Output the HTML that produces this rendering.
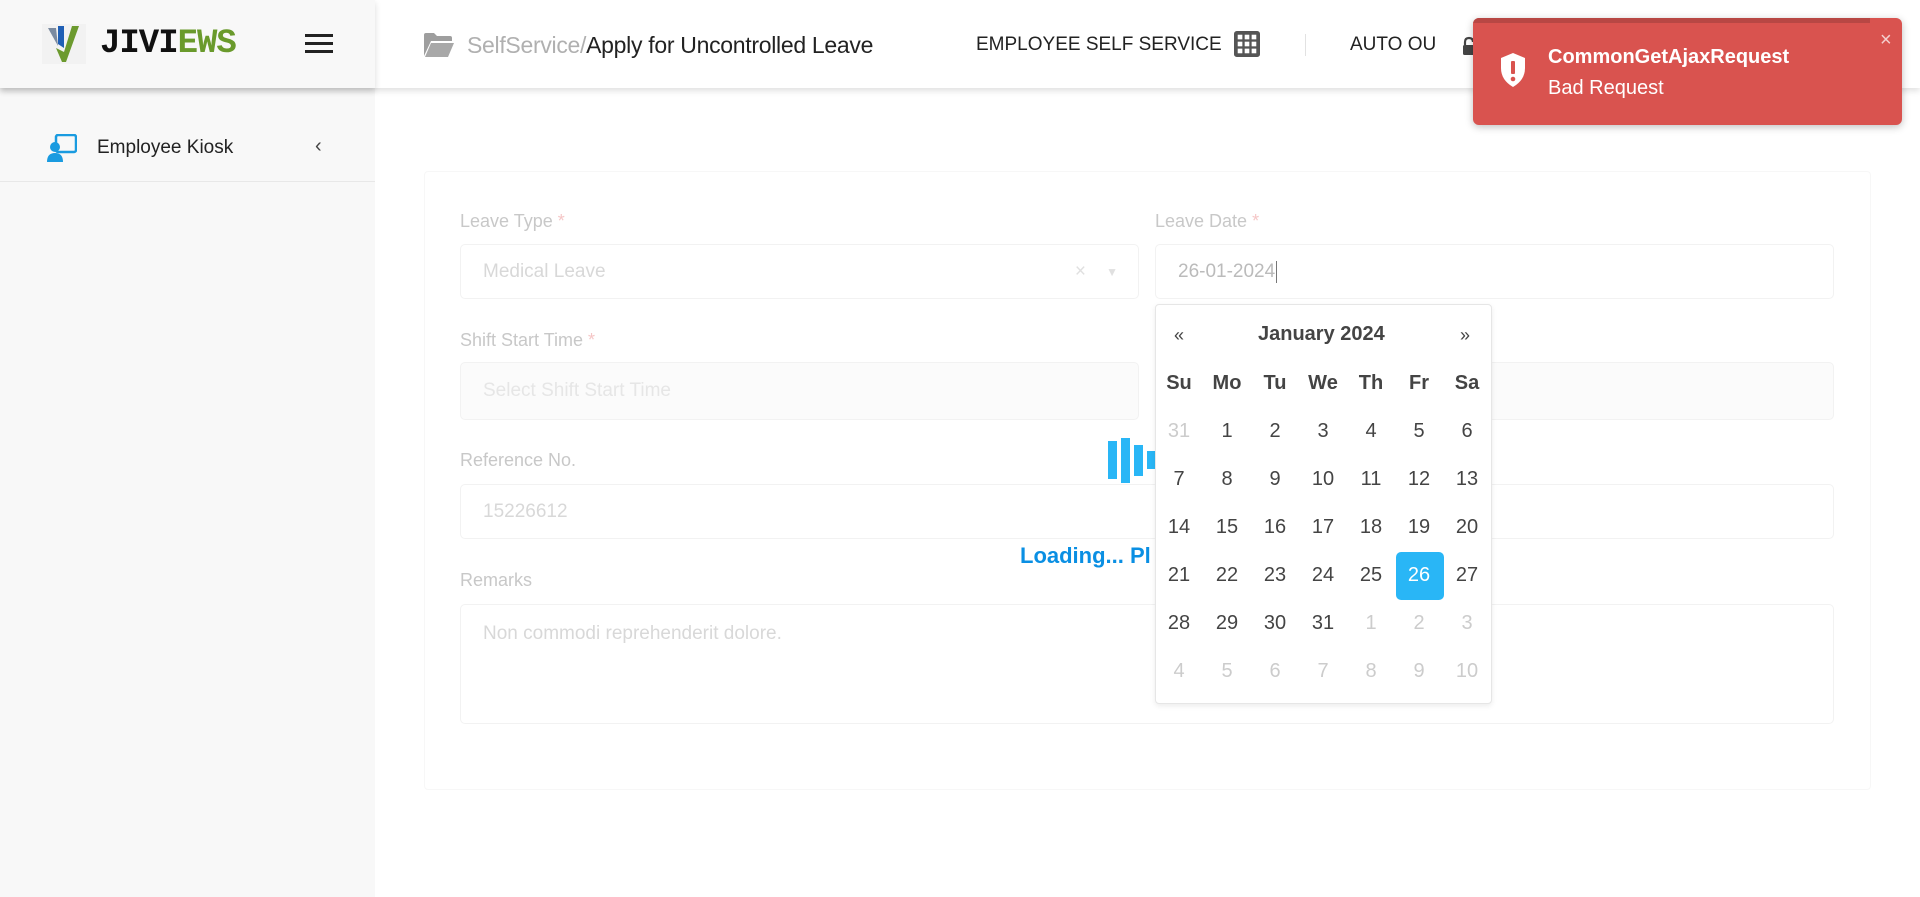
<!DOCTYPE html>
<html><head><meta charset="utf-8"><style>
*{box-sizing:border-box;margin:0;padding:0}
body{width:1920px;height:897px;position:relative;overflow:hidden;background:#fff;font-family:"Liberation Sans",sans-serif}
.a{position:absolute}
.side{left:0;top:0;width:375px;height:897px;background:#f8f8f8}
.hdr{left:0;top:0;width:1920px;height:88px;background:#fff;box-shadow:0 3px 6px rgba(0,0,0,.12)}
.hdrl{left:0;top:0;width:375px;height:88px;background:#f8f8f8;box-shadow:0 3px 6px rgba(0,0,0,.15)}
.lbl{font-size:18px;color:#c8c8c8;font-weight:500}
.lbl i{font-style:normal;color:#f5c6c6}
.inp{border:1px solid #f2f2f2;border-radius:5px;font-size:19px;color:#d8d8d8;padding-left:22px;display:flex;align-items:center}
.cal{left:1155px;top:304px;width:337px;height:400px;background:#fff;border:1px solid #e6e6e6;border-radius:4px;box-shadow:0 2px 6px rgba(0,0,0,.08)}
.c{position:absolute;width:48px;text-align:center;font-size:20px;color:#444}
.m{color:#ccc}
.w{font-weight:bold;color:#444}
</style></head><body>
<div class="a side"></div>
<div class="a hdr"></div>
<div class="a hdrl"></div>
<svg class="a" style="left:42px;top:24px" width="44" height="40" viewBox="0 0 44 40"><rect width="44" height="40" fill="#f2f2f2"/><path d="M6 4 L14 4 L16 22 Z" fill="#7a8aa0"/><path d="M16 2 L22 2 L22 24 L16 20 Z" fill="#1f5fb5"/><path d="M30 2 L37 2 L24 38 L20 38 L14 24 L22 28 Z" fill="#6c9a2e"/></svg>
<div class="a" style="left:100px;top:25px;font-size:34px;font-weight:bold;font-family:'Liberation Mono',monospace;letter-spacing:-1px;color:#111">JIVI<span style="color:#6a9a2c">EWS</span></div>
<div class="a" style="left:305px;top:34px;width:28px;height:3px;background:#222;box-shadow:0 8px 0 #222,0 16px 0 #222"></div>
<svg class="a" style="left:423px;top:32px" width="32" height="26" viewBox="0 0 32 26"><path d="M1 3 Q1 1 3 1 L11 1 L14 4 L27 4 Q29 4 29 6 L29 9 L8 9 L1 24 Z" fill="#9e9e9e"/><path d="M8 11 L31 11 L25 25 L2 25 Z" fill="#a8a8a8"/></svg>
<div class="a" style="left:467px;top:32px;font-size:23px;color:#222;letter-spacing:-.3px"><span style="color:#b0b0b0">SelfService/</span>Apply for Uncontrolled Leave</div>
<div class="a" style="left:976px;top:34px;font-size:19px;color:#222">EMPLOYEE SELF SERVICE</div>
<svg class="a" style="left:1234px;top:31px" width="26" height="26" viewBox="0 0 28 28"><rect width="28" height="28" rx="3" fill="#555"/><g fill="#fff"><rect x="4" y="4" width="5" height="5"/><rect x="11.5" y="4" width="5" height="5"/><rect x="19" y="4" width="5" height="5"/><rect x="4" y="11.5" width="5" height="5"/><rect x="11.5" y="11.5" width="5" height="5"/><rect x="19" y="11.5" width="5" height="5"/><rect x="4" y="19" width="5" height="5"/><rect x="11.5" y="19" width="5" height="5"/><rect x="19" y="19" width="5" height="5"/></g></svg>
<div class="a" style="left:1305px;top:34px;width:1px;height:22px;background:#e2e2e2"></div>
<div class="a" style="left:1350px;top:34px;font-size:19px;color:#222">AUTO OU</div>
<svg class="a" style="left:1462px;top:36px" width="14" height="20" viewBox="0 0 14 20"><path d="M3 9 V6 Q3 2 7 2 Q11 2 11 6" fill="none" stroke="#444" stroke-width="2.2"/><rect x="1" y="9" width="12" height="10" rx="1.5" fill="#444"/></svg>
<svg class="a" style="left:47px;top:134px" width="30" height="28" viewBox="0 0 30 28"><rect x="9" y="1" width="20" height="17" rx="2" fill="none" stroke="#1a9be0" stroke-width="2.5"/><circle cx="8" cy="13" r="5" fill="#1a9be0"/><path d="M0 28 Q0 19 8 19 Q16 19 16 28 Z" fill="#1a9be0"/></svg>
<div class="a" style="left:97px;top:137px;font-size:19px;color:#222">Employee Kiosk</div>
<div class="a" style="left:315px;top:135px;font-size:20px;color:#444">‹</div>
<div class="a" style="left:0;top:181px;width:375px;height:1px;background:#e8e8e8"></div>
<div class="a" style="left:424px;top:171px;width:1447px;height:619px;border:1px solid #f7f7f7;border-radius:4px"></div>
<div class="a lbl" style="left:460px;top:211px">Leave Type <i>*</i></div>
<div class="a inp" style="left:460px;top:244px;width:679px;height:55px">Medical Leave<span style="position:absolute;right:52px;color:#e0e0e0">×</span><span style="position:absolute;right:20px;font-size:12px;color:#e0e0e0">▼</span></div>
<div class="a lbl" style="left:1155px;top:211px">Leave Date <i>*</i></div>
<div class="a inp" style="left:1155px;top:244px;width:679px;height:55px;color:#bbb">26-01-2024<span style="display:inline-block;width:1px;height:22px;background:#777;margin-left:1px"></span></div>
<div class="a lbl" style="left:460px;top:330px">Shift Start Time <i>*</i></div>
<div class="a inp" style="left:460px;top:362px;width:679px;height:58px;background:#fbfbfb;color:#e6e6e6">Select Shift Start Time</div>
<div class="a inp" style="left:1155px;top:362px;width:679px;height:58px;background:#fbfbfb"></div>
<div class="a lbl" style="left:460px;top:450px">Reference No.</div>
<div class="a inp" style="left:460px;top:484px;width:1374px;height:55px">15226612</div>
<div class="a lbl" style="left:460px;top:570px">Remarks</div>
<div class="a inp" style="left:460px;top:604px;width:1374px;height:120px;align-items:flex-start;padding-top:18px">Non commodi reprehenderit dolore.</div>
<div class="a" style="left:1108px;top:441px;width:9px;height:38px;background:#29b6f6"></div>
<div class="a" style="left:1121px;top:438px;width:9px;height:45px;background:#29b6f6"></div>
<div class="a" style="left:1134px;top:445px;width:9px;height:31px;background:#29b6f6"></div>
<div class="a" style="left:1147px;top:451px;width:9px;height:18px;background:#29b6f6"></div>
<div class="a" style="left:1020px;top:543px;font-size:22px;color:#0a8fe3;font-weight:bold">Loading... Pl</div>
<div class="a cal"></div>
<div class="a" style="left:1174px;top:325px;font-size:18px;color:#444">«</div>
<div class="a" style="left:1258px;top:323px;font-size:20px;font-weight:bold;color:#444">January 2024</div>
<div class="a" style="left:1460px;top:325px;font-size:18px;color:#444">»</div>
<div class="a" style="left:1396px;top:552px;width:48px;height:48px;background:#29b6f6;border-radius:5px"></div>
<div id="g"></div>
<script>
var d=["Su","Mo","Tu","We","Th","Fr","Sa"],h="";
for(var i=0;i<7;i++)h+='<div class="c w" style="left:'+(1155+i*48)+'px;top:372px">'+d[i]+'</div>';
var n=[31];for(var k=1;k<=31;k++)n.push(k);for(k=1;k<=10;k++)n.push(k);
for(var r=0;r<6;r++)for(i=0;i<7;i++){var idx=r*7+i,v=n[idx],cl="c";if(idx==0||idx>31)cl+=" m";var st="";if(idx==26)st="color:#fff";
h+='<div class="'+cl+'" style="left:'+(1155+i*48)+'px;top:'+(420+r*48)+'px;'+st+'">'+v+'</div>';}
document.getElementById("g").innerHTML=h;
</script>
<div class="a" style="left:1473px;top:18px;width:429px;height:107px;background:#d9534f;border-radius:6px;box-shadow:0 2px 8px rgba(0,0,0,.25);overflow:hidden"><div style="width:397px;height:5px;background:#b84744"></div></div>
<svg class="a" style="left:1500px;top:52px" width="26" height="36" viewBox="0 0 26 36"><path d="M13 1 L25 6 L25 16 Q25 28 13 35 Q1 28 1 16 L1 6 Z" fill="#fff"/><rect x="11" y="9" width="4" height="13" rx="1" fill="#d9534f"/><circle cx="13" cy="27" r="2.3" fill="#d9534f"/></svg>
<div class="a" style="left:1548px;top:46px;font-size:20px;font-weight:bold;color:#fff">CommonGetAjaxRequest</div>
<div class="a" style="left:1548px;top:77px;font-size:20px;color:#fff">Bad Request</div>
<div class="a" style="left:1880px;top:29px;font-size:20px;color:#f4d0cf">×</div>
</body></html>
